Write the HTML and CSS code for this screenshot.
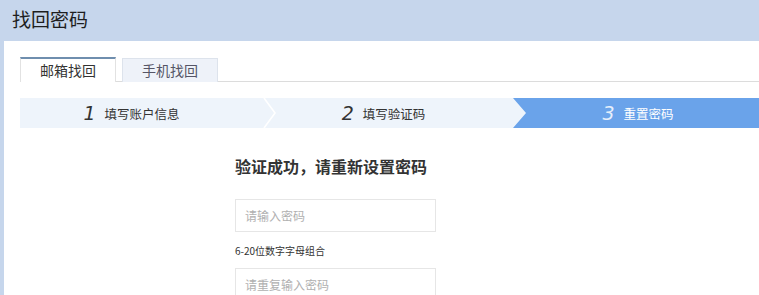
FILE: index.html
```html
<!DOCTYPE html>
<html lang="zh-CN">
<head>
    <meta charset="UTF-8">
    <title>找回密码</title>
    <link rel="stylesheet" href="styles.css">
</head>
<body>

    <div class="header">找回密码</div>

    <div class="panel">
        <!-- onglets -->
        <div class="tabs">
            <div class="tab active">邮箱找回</div>
            <div class="tab">手机找回</div>
        </div>

        <!-- étapes -->
        <div class="steps">
            <div class="step step-1"><em>1</em>填写账户信息</div>
            <svg class="sep" width="13" height="30" viewBox="0 0 13 30">
                <polyline points="1,0 12,15 1,30" fill="none" stroke="#ffffff" stroke-width="1.6"/>
            </svg>
            <div class="step step-2"><em>2</em>填写验证码</div>
            <div class="step step-3"><em>3</em>重置密码</div>
        </div>

        <div class="form">
            <h3>验证成功，请重新设置密码</h3>
            <input type="password" class="field" placeholder="请输入密码">
            <p class="hint">6-20位数字字母组合</p>
            <input type="password" class="field" placeholder="请重复输入密码">
        </div>
    </div>

</body>
</html>
```

FILE: styles.css
```css
* {
    margin: 0;
    padding: 0;
    box-sizing: border-box;
}

body {
    font-family: "Noto Sans CJK SC", "Liberation Sans", sans-serif;
    background-color: #c6d6ec;
    color: #333;
    overflow: hidden;
}

.header {
    height: 41px;
    line-height: 37px;
    padding-left: 12px;
    font-size: 19px;
    color: #1e1e1e;
}

.panel {
    margin-left: 4px;
    background-color: #fff;
    padding: 16px 0 40px 16px;
    min-height: 260px;
}

.tabs {
    display: flex;
    gap: 6px;
    border-bottom: 1px solid #dcdcdc;
    height: 25px;
}

.tab {
    width: 96px;
    height: 24px;
    line-height: 22px;
    font-size: 14px;
    text-align: center;
    color: #556;
    background-color: #eef2f9;
    border: 1px solid #dde3ec;
    border-bottom: none;
    margin-top: 1px;
}

.tab.active {
    background-color: #fff;
    color: #333;
    border: 1px solid #e2e2e2;
    border-top: 2px solid #6f8eae;
    border-bottom: none;
    margin-top: 0;
    height: 25px;
}

.steps {
    display: flex;
    height: 30px;
    margin-top: 16px;
    background-color: #eef4fb;
}

.step {
    display: flex;
    align-items: center;
    justify-content: center;
    font-size: 12.5px;
    color: #333;
}

.step em {
    font-family: "DejaVu Sans", sans-serif;
    font-style: italic;
    font-size: 19px;
    font-weight: 300;
    margin-right: 9px;
}

.step-1 {
    width: 243px;
    padding-right: 20px;
}

.sep {
    flex-shrink: 0;
}

.step-2 {
    width: 237px;
    padding-right: 22px;
}

.step-3 {
    flex: 1;
    background-color: #6aa3ea;
    color: #fff;
    clip-path: polygon(0 0, 100% 0, 100% 100%, 0 100%, 13px 50%);
    padding-left: 4px;
}

.step-3 em {
    color: #e6effb;
}

.form {
    padding-left: 215px;
}

.form h3 {
    font-size: 16px;
    line-height: 22px;
    font-weight: bold;
    margin-top: 27px;
    color: #333;
}

.field {
    display: block;
    width: 201px;
    height: 33px;
    margin-top: 22px;
    border: 1px solid #e6e6e6;
    padding-left: 9px;
    font-size: 12px;
    font-family: inherit;
    outline: none;
}

.field::placeholder {
    color: #b0b0b0;
}

.hint {
    font-size: 10px;
    line-height: 16px;
    margin-top: 11px;
    color: #333;
}

.hint + .field {
    margin-top: 9px;
}
```
